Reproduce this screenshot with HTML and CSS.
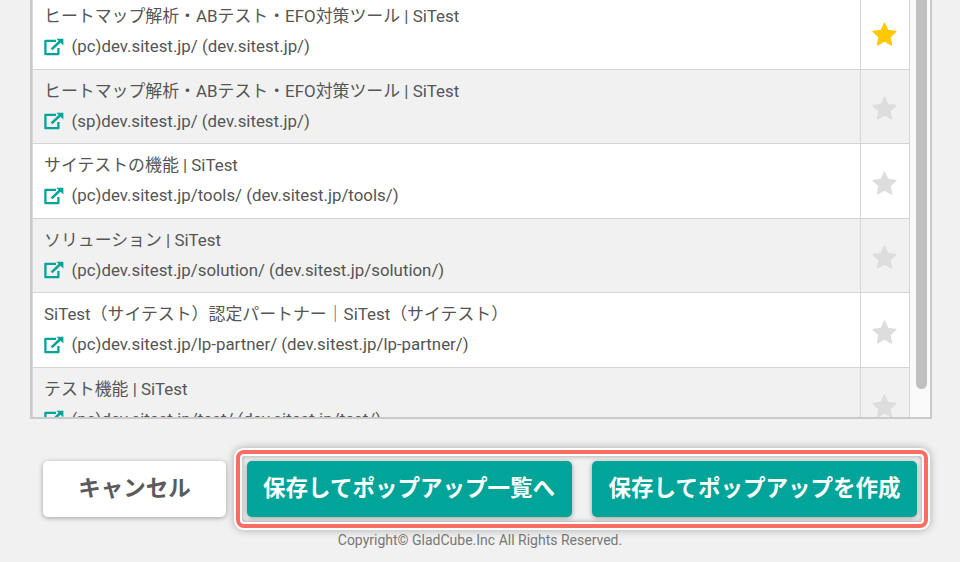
FILE: index.html
```
<!DOCTYPE html>
<html lang="ja">
    <head>
        <meta charset="utf-8">
        <title>SiTest</title>
        <link rel="stylesheet" href="styles.css">
    </head>
    <body>
        <svg class="defs">
            <symbol id="open" viewBox="0 0 20 18">
                <path d="M12 2.8H1.4V16.2H14.4V10" fill="none" stroke="currentColor" stroke-width="2.3" stroke-linejoin="round"/>
                <path d="M7.6 11.4L16.4 3" fill="none" stroke="currentColor" stroke-width="2.6"/>
                <path d="M12.4 .8H19.4V7.4Z" fill="currentColor"/>
            </symbol>
            <symbol id="star" viewBox="0 0 24 24">
                <path d="M12 1.2L15.2 8.2L22.9 9.1L17.2 14.4L18.7 22L12 18.2L5.3 22L6.8 14.4L1.1 9.1L8.8 8.2Z" fill="currentColor" stroke="currentColor" stroke-width="1.4" stroke-linejoin="round"/>
            </symbol>
        </svg>
        <div class="list">
            <div class="rows">
                <div class="row">
                    <div class="page">
                        <div class="title">ヒートマップ解析・ABテスト・EFO対策ツール | SiTest</div>
                        <div class="url"><svg class="open"><use href="#open"/></svg>(pc)dev.sitest.jp/ (dev.sitest.jp/)</div>
                    </div>
                    <div class="fav on"><svg class="star"><use href="#star"/></svg></div>
                </div>
                <div class="row">
                    <div class="page">
                        <div class="title">ヒートマップ解析・ABテスト・EFO対策ツール | SiTest</div>
                        <div class="url"><svg class="open"><use href="#open"/></svg>(sp)dev.sitest.jp/ (dev.sitest.jp/)</div>
                    </div>
                    <div class="fav"><svg class="star"><use href="#star"/></svg></div>
                </div>
                <div class="row">
                    <div class="page">
                        <div class="title">サイテストの機能 | SiTest</div>
                        <div class="url"><svg class="open"><use href="#open"/></svg>(pc)dev.sitest.jp/tools/ (dev.sitest.jp/tools/)</div>
                    </div>
                    <div class="fav"><svg class="star"><use href="#star"/></svg></div>
                </div>
                <div class="row">
                    <div class="page">
                        <div class="title">ソリューション | SiTest</div>
                        <div class="url"><svg class="open"><use href="#open"/></svg>(pc)dev.sitest.jp/solution/ (dev.sitest.jp/solution/)</div>
                    </div>
                    <div class="fav"><svg class="star"><use href="#star"/></svg></div>
                </div>
                <div class="row">
                    <div class="page">
                        <div class="title">SiTest（サイテスト）認定パートナー｜SiTest（サイテスト）</div>
                        <div class="url"><svg class="open"><use href="#open"/></svg>(pc)dev.sitest.jp/lp-partner/ (dev.sitest.jp/lp-partner/)</div>
                    </div>
                    <div class="fav"><svg class="star"><use href="#star"/></svg></div>
                </div>
                <div class="row">
                    <div class="page">
                        <div class="title">テスト機能 | SiTest</div>
                        <div class="url"><svg class="open"><use href="#open"/></svg>(pc)dev.sitest.jp/test/ (dev.sitest.jp/test/)</div>
                    </div>
                    <div class="fav"><svg class="star"><use href="#star"/></svg></div>
                </div>
            </div>
            <div class="scroll"><div class="thumb"></div></div>
        </div>
        <div class="buttons">
            <button class="btn cancel">キャンセル</button>
            <div class="marked">
                <button class="btn save">保存してポップアップ一覧へ</button>
                <button class="btn save">保存してポップアップを作成</button>
            </div>
        </div>
        <div class="copyright">Copyright© GladCube.Inc All Rights Reserved.</div>
    </body>
</html>
```
FILE: styles.css
```
*{
    box-sizing: border-box;
}
body{
    margin: 0;
    height: 562px;
    overflow: hidden;
    background-color: #f1f1f1;
    color: #555555;
    font-family: Roboto, "Noto Sans CJK JP", sans-serif;
}
.defs{
    display: none;
}
.list{
    display: flex;
    width: 902px;
    height: 419px;
    margin-left: 30px;
    overflow: hidden;
    border: 2px solid #cacaca;
    border-top: 0;
}
.rows{
    flex: 1;
    margin-top: -4.7px;
    border-left: 1px solid #d8d8d8;
}
.row{
    display: flex;
    height: 74.45px;
    background-color: white;
    border-bottom: 1px solid #d3d3d3;
}
.row:nth-child(even){
    background-color: #f1f1f1;
}
.page{
    flex: 1;
    padding: 6px 0 0 11px;
}
.title,
.url{
    height: 30px;
    line-height: 30px;
    font-size: 16.9px;
    white-space: nowrap;
}
.url{
    display: flex;
    align-items: center;
    font-size: 16.85px;
}
.open{
    width: 20px;
    height: 18px;
    margin: 1px 7.5px 0 0;
    color: #00a498;
}
.fav{
    display: flex;
    align-items: center;
    justify-content: center;
    width: 50px;
    padding: 5px 1px 0 0;
    border-left: 1px solid #d6d6d6;
    border-right: 1px solid #d6d6d6;
    color: #dddddd;
}
.on{
    color: #ffc800;
}
.star{
    width: 25px;
    height: 25px;
}
.scroll{
    width: 20px;
    padding-left: 6px;
    background-color: #fafafa;
}
.thumb{
    width: 11px;
    height: 389px;
    border-radius: 0 0 6px 6px;
    background-color: #c0c0c0;
}
.buttons{
    display: flex;
    align-items: center;
    gap: 8px;
    margin: 35px 0 0 43px;
}
.btn{
    height: 56px;
    padding: 0 0 6px;
    border: 0;
    border-radius: 5px;
    box-shadow: 0 1px 5px rgba(0, 0, 0, .35);
    font-family: "Noto Sans CJK JP", sans-serif;
    font-size: 22.5px;
    font-weight: bold;
    white-space: nowrap;
}
.cancel{
    width: 183px;
    background-color: white;
    color: #5b5b5b;
}
.save{
    width: 325px;
    background-color: #00a498;
    color: white;
}
/* red frame with a white line on both sides */
.marked{
    display: flex;
    gap: 20.5px;
    padding: 5px 4.5px 5px 4.5px;
    border: 2px solid white;
    border-radius: 4px;
    outline: 4px solid #f76d62;
    box-shadow: 0 0 0 6px white, 0 0 9px 6px rgba(0, 0, 0, .3), inset 0 0 5px rgba(0, 0, 0, .35);
    margin-left: 6px;
}
.copyright{
    margin-top: 6px;
    color: #777777;
    font-size: 14px;
    line-height: 20px;
    text-align: center;
}
```
